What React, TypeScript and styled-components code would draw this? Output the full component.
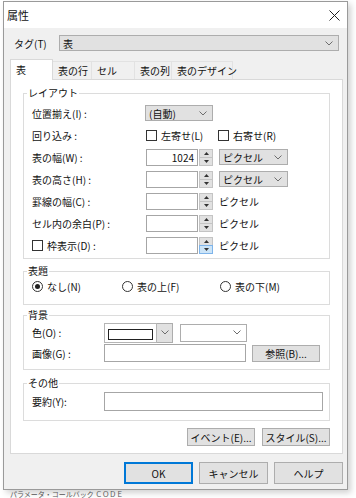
import React from 'react';
import styled, { createGlobalStyle } from 'styled-components';

const GlobalStyle = createGlobalStyle`
  html, body {
    margin: 0;
    padding: 0;
    background: #ffffff;
  }
  body {
    font-family: "Noto Sans CJK JP", "Noto Sans", "Liberation Sans", sans-serif;
    font-size: 10px;
    color: #111;
  }
  * { box-sizing: border-box; }
`;

// Page + window frame
const Screen = styled.div`
  width: 356px;
  height: 498px;
  overflow: hidden;
  background: #fff;
  display: flex;
  flex-direction: column;
`;

const Dialog = styled.div`
  margin: 1px 0 0 3px;
  width: 345px;
  height: 489px;
  flex: none;
  border: 1px solid #9a9a9a;
  background: #f0f0f0;
  display: flex;
  flex-direction: column;
  box-shadow: 3px 3px 6px rgba(0, 0, 0, 0.18);
`;

const BehindText = styled.div`
  height: 8px;
  padding-left: 10px;
  font-size: 7px;
  line-height: 8px;
  color: #555;
  white-space: nowrap;
`;

const TitleBar = styled.div`
  height: 26px;
  background: #fff;
  display: flex;
  align-items: center;
  justify-content: space-between;
  padding: 0 7px 0 3px;
  font-size: 11px;
`;

const Body = styled.div`
  flex: 1;
  padding: 7px 4px 0 6px;
  display: flex;
  flex-direction: column;
`;

const TagRow = styled.div`
  display: flex;
  align-items: center;
  height: 16px;
  padding-left: 4px;
`;

const TagLabel = styled.span`
  width: 45px;
`;

// Tabs
const TabStrip = styled.div`
  display: flex;
  align-items: flex-end;
  margin-top: 7px;
  height: 21px;
`;

const Tab = styled.div<{ $active?: boolean; $w: number }>`
  width: ${p => p.$w}px;
  height: ${p => (p.$active ? 21 : 18)}px;
  padding-left: 5px;
  line-height: ${p => (p.$active ? 19 : 17)}px;
  background: ${p => (p.$active ? '#fff' : '#f0f0f0')};
  border: 1px solid ${p => (p.$active ? '#d9d9d9' : '#e2e2e2')};
  border-bottom: none;
  margin-bottom: ${p => (p.$active ? -1 : 0)}px;
  position: relative;
  z-index: ${p => (p.$active ? 1 : 0)};
  margin-left: ${p => (p.$active ? 0 : -1)}px;
  white-space: nowrap;
`;

const Panel = styled.div`
  height: 375px;
  background: #fff;
  border: 1px solid #d9d9d9;
  padding: 6px 12px 0 12px;
  display: flex;
  flex-direction: column;
`;

// Group boxes
const Group = styled.fieldset<{ $pt?: number; $pb?: number; $mt?: number }>`
  margin: ${p => p.$mt ?? 5}px 0 0 0;
  padding: ${p => p.$pt ?? 2}px 8px ${p => p.$pb ?? 2}px 8px;
  border: 1px solid #dcdcdc;
  min-width: 0;
`;

const Legend = styled.legend`
  padding: 0 1px;
  margin-left: -5px;
  line-height: 14px;
`;

const Row = styled.div<{ $label: number; $h?: number }>`
  display: grid;
  grid-template-columns: ${p => p.$label}px 1fr;
  align-items: center;
  height: ${p => p.$h ?? 22}px;
`;

const Controls = styled.div<{ $gap?: number }>`
  display: flex;
  align-items: center;
  gap: ${p => p.$gap ?? 6}px;
`;

// Form controls
const SelectBox = styled.div<{ $w: number; $h?: number; $white?: boolean }>`
  width: ${p => p.$w}px;
  height: ${p => p.$h ?? 16}px;
  background: ${p => (p.$white ? '#fff' : '#e1e1e1')};
  border: 1px solid #adadad;
  display: flex;
  align-items: center;
  justify-content: space-between;
  padding: 0 5px 0 3px;
`;

const TextBox = styled.div<{ $w: number; $h?: number; $right?: boolean }>`
  width: ${p => p.$w}px;
  height: ${p => p.$h ?? 17}px;
  background: #fff;
  border: 1px solid #a6a6a6;
  display: flex;
  align-items: center;
  justify-content: ${p => (p.$right ? 'flex-end' : 'flex-start')};
  padding: 0 3px;
`;

const SpinWrap = styled.div`
  display: flex;
  align-items: center;
`;

const Spinner = styled.div`
  width: 14px;
  height: 17px;
  margin-left: 1px;
  display: flex;
  flex-direction: column;
`;

const SpinHalf = styled.div<{ $hot?: boolean }>`
  flex: 1;
  background: ${p => (p.$hot ? '#cce4f7' : '#e1e1e1')};
  border: 1px solid ${p => (p.$hot ? '#7eb4ea' : '#c4c4c4')};
  display: flex;
  align-items: center;
  justify-content: center;
  & + & { margin-top: -1px; }
`;

const Check = styled.label<{ $w?: number }>`
  display: flex;
  align-items: center;
  gap: 4px;
  width: ${p => (p.$w ? `${p.$w}px` : 'auto')};
`;

const CheckBox = styled.span`
  width: 11px;
  height: 11px;
  border: 1px solid #333;
  background: #fff;
  flex: none;
`;

const RadioCircle = styled.span<{ $on?: boolean }>`
  width: 11px;
  height: 11px;
  border-radius: 50%;
  border: 1px solid #333;
  background: #fff;
  flex: none;
  display: flex;
  align-items: center;
  justify-content: center;
  &::after {
    content: '';
    width: 5px;
    height: 5px;
    border-radius: 50%;
    background: ${p => (p.$on ? '#222' : 'transparent')};
  }
`;

const RadioRow = styled.div`
  display: flex;
  align-items: center;
  height: 16px;
`;

const Swatch = styled.div`
  width: 53px;
  height: 20px;
  background: #fff;
  border: 1px solid #b5b5b5;
  padding: 5px 3px 4px 3px;
  &::after {
    content: '';
    display: block;
    height: 100%;
    border: 1px solid #222;
  }
`;

const SwatchDrop = styled.div`
  width: 16px;
  height: 20px;
  background: #e1e1e1;
  border: 1px solid #adadad;
  border-left: none;
  display: flex;
  align-items: center;
  justify-content: center;
`;

const Button = styled.div<{ $w: number; $h: number; $default?: boolean }>`
  width: ${p => p.$w}px;
  height: ${p => p.$h}px;
  background: #e1e1e1;
  border: ${p => (p.$default ? '2px solid #0078d7' : '1px solid #adadad')};
  display: flex;
  align-items: center;
  justify-content: center;
  white-space: nowrap;
`;

const ActionRow = styled.div`
  display: flex;
  justify-content: flex-end;
  gap: 7px;
  margin-top: 7px;
`;

const Footer = styled.div`
  display: flex;
  justify-content: flex-end;
  gap: 6px;
  margin-top: 8px;
`;

const Chevron = () => (
  <svg width="8" height="5" viewBox="0 0 8 5">
    <path d="M0.5 0.5 L4 4 L7.5 0.5" fill="none" stroke="#6d6d6d" strokeWidth="1" />
  </svg>
);

const Tri = ({ up }: { up?: boolean }) => (
  <svg width="5" height="3" viewBox="0 0 5 3">
    <path d={up ? 'M0 3 L2.5 0 L5 3 Z' : 'M0 0 L2.5 3 L5 0 Z'} fill="#333" />
  </svg>
);

const Close = () => (
  <svg width="11" height="11" viewBox="0 0 11 11">
    <path d="M0.5 0.5 L10.5 10.5 M10.5 0.5 L0.5 10.5" stroke="#222" strokeWidth="1" />
  </svg>
);

const Spin = ({ hot }: { hot?: boolean }) => (
  <Spinner>
    <SpinHalf><Tri up /></SpinHalf>
    <SpinHalf $hot={hot}><Tri /></SpinHalf>
  </Spinner>
);

const NumberField = ({ value, hot }: { value?: string; hot?: boolean }) => (
  <SpinWrap>
    <TextBox $w={52} $right>{value}</TextBox>
    <Spin hot={hot} />
  </SpinWrap>
);

const App: React.FC = () => {
  return (
    <Screen>
      <GlobalStyle />
      <Dialog>
        <TitleBar>
          <span>属性</span>
          <Close />
        </TitleBar>
        <Body>
          <TagRow>
            <TagLabel>タグ(T)</TagLabel>
            <SelectBox $w={280} $h={16}>
              <span>表</span>
              <Chevron />
            </SelectBox>
          </TagRow>

          <TabStrip>
            <Tab $active $w={43}>表</Tab>
            <Tab $w={40}>表の行</Tab>
            <Tab $w={44}>セル</Tab>
            <Tab $w={38}>表の列</Tab>
            <Tab $w={62}>表のデザイン</Tab>
          </TabStrip>

          <Panel>
            <Group $mt={0}>
              <Legend>レイアウト</Legend>
              <Row $label={113}>
                <span>位置揃え(I) :</span>
                <SelectBox $w={68}>
                  <span>(自動)</span>
                  <Chevron />
                </SelectBox>
              </Row>
              <Row $label={114}>
                <span>回り込み :</span>
                <Controls $gap={0}>
                  <Check $w={72}><CheckBox />左寄せ(L)</Check>
                  <Check><CheckBox />右寄せ(R)</Check>
                </Controls>
              </Row>
              <Row $label={114}>
                <span>表の幅(W) :</span>
                <Controls>
                  <NumberField value="1024" />
                  <SelectBox $w={69}>
                    <span>ピクセル</span>
                    <Chevron />
                  </SelectBox>
                </Controls>
              </Row>
              <Row $label={114}>
                <span>表の高さ(H) :</span>
                <Controls>
                  <NumberField />
                  <SelectBox $w={69}>
                    <span>ピクセル</span>
                    <Chevron />
                  </SelectBox>
                </Controls>
              </Row>
              <Row $label={114}>
                <span>罫線の幅(C) :</span>
                <Controls>
                  <NumberField />
                  <span>ピクセル</span>
                </Controls>
              </Row>
              <Row $label={114}>
                <span>セル内の余白(P) :</span>
                <Controls>
                  <NumberField />
                  <span>ピクセル</span>
                </Controls>
              </Row>
              <Row $label={114}>
                <Check><CheckBox />枠表示(D) :</Check>
                <Controls>
                  <NumberField hot />
                  <span>ピクセル</span>
                </Controls>
              </Row>
            </Group>

            <Group $pt={0} $pb={10}>
              <Legend>表題</Legend>
              <RadioRow>
                <Check $w={90}><RadioCircle $on />なし(N)</Check>
                <Check $w={98}><RadioCircle />表の上(F)</Check>
                <Check><RadioCircle />表の下(M)</Check>
              </RadioRow>
            </Group>

            <Group $pt={0} $pb={6} $mt={3}>
              <Legend>背景</Legend>
              <Row $label={72} $h={21}>
                <span>色(O) :</span>
                <Controls $gap={7}>
                  <Controls $gap={0}>
                    <Swatch />
                    <SwatchDrop><Chevron /></SwatchDrop>
                  </Controls>
                  <SelectBox $w={67} $h={18} $white>
                    <span />
                    <Chevron />
                  </SelectBox>
                </Controls>
              </Row>
              <Row $label={72} $h={20}>
                <span>画像(G) :</span>
                <Controls>
                  <TextBox $w={142} $h={18} />
                  <Button $w={68} $h={17}>参照(B)...</Button>
                </Controls>
              </Row>
            </Group>

            <Group $pt={1} $pb={8} $mt={6}>
              <Legend>その他</Legend>
              <Row $label={72} $h={21}>
                <span>要約(Y):</span>
                <TextBox $w={219} $h={19} />
              </Row>
            </Group>

            <ActionRow>
              <Button $w={68} $h={18}>イベント(E)...</Button>
              <Button $w={68} $h={18}>スタイル(S)...</Button>
            </ActionRow>
          </Panel>

          <Footer>
            <Button $w={69} $h={22} $default>OK</Button>
            <Button $w={69} $h={22}>キャンセル</Button>
            <Button $w={69} $h={22}>ヘルプ</Button>
          </Footer>
        </Body>
      </Dialog>
      <BehindText>パラメータ・コールバック ＣＯＤＥ</BehindText>
    </Screen>
  );
};

export default App;
